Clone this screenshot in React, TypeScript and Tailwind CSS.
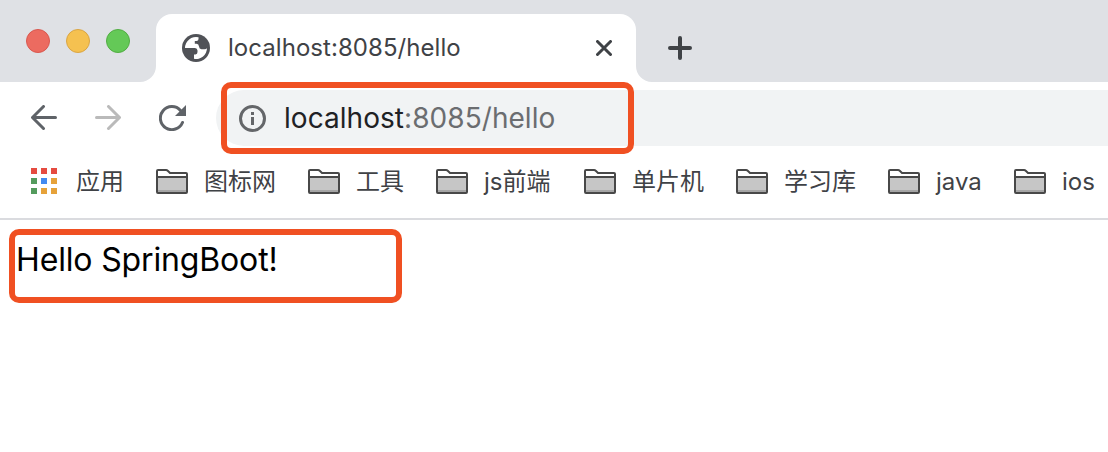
import React from "react";

const font = "font-['Inter','Noto_Sans_CJK_SC',sans-serif]";

function Globe() {
  return (
    <svg className="block size-7 shrink-0" viewBox="0 0 28 28">
      <circle cx="14" cy="14" r="14" fill="#505257" />
      <path fill="#fff" d="M3 14A11 11 0 0 1 16.500 3.300V5Q16.500 7 14.500 7H12.800V9.800H14.500Q16.800 10 17 12.500Q17.200 15 19.500 15.300H22.500Q24.500 15.300 25 14A11 11 0 0 1 12 24.800V20.500H13.500Q15.500 20.300 15.500 18V16.500Q15.300 14 13 14Z" />
    </svg>
  );
}

function Folder() {
  return (
    <svg className="block h-[25px] w-8 shrink-0" viewBox="0 0 32 25">
      <path d="M1 23V2Q1 1 2 1H10Q11 1 12 2L14 4H30Q31 4 31 5V23Q31 24 30 24H2Q1 24 1 23Z" fill="#fff" stroke="#484848" strokeWidth="2" />
      <path d="M2 8H30V23H2Z" fill="#c6c6c6" />
      <path d="M2 21H30V23H2Z" fill="#a5a5a5" />
      <path d="M1 8H31" stroke="#484848" strokeWidth="2" />
    </svg>
  );
}

const apps = ["bg-[#e54b40]", "bg-[#e54b40]", "bg-[#e54b40]", "bg-[#549b5d]", "bg-[#438af0]", "bg-[#e6a23a]", "bg-[#549b5d]", "bg-[#e6a23a]", "bg-[#e6a23a]"];

const bookmarks = [
  { label: "图标网", width: "w-[152px]" },
  { label: "工具", width: "w-[128px]" },
  { label: "js前端", width: "w-[148px]" },
  { label: "单片机", width: "w-[152px]" },
  { label: "学习库", width: "w-[152px]" },
  { label: "java", width: "w-[126px]" },
  { label: "ios", width: "w-[100px]" },
];

export default function App() {
  return (
    <div className={`relative h-[452px] w-[1108px] overflow-hidden bg-white ${font}`}>
      <header className="flex h-[82px] bg-[#dfe1e5]">
        <div className="flex w-[156px] gap-4 pl-[26px] pt-[29px]">
          <span className="size-6 rounded-full border border-[#d9584f] bg-[#ec6b60]" />
          <span className="size-6 rounded-full border border-[#daa544] bg-[#f5c150]" />
          <span className="size-6 rounded-full border border-[#52ad43] bg-[#64c957]" />
        </div>
        <div className="relative mt-[14px] flex h-[68px] w-[480px] items-center rounded-t-2xl bg-white pl-[26px]">
          <svg className="absolute -left-4 bottom-0 size-4" viewBox="0 0 16 16"><path d="M16 0V16H0A16 16 0 0 0 16 0Z" fill="#fff" /></svg>
          <svg className="absolute -right-4 bottom-0 size-4" viewBox="0 0 16 16"><path d="M0 0V16H16A16 16 0 0 1 0 0Z" fill="#fff" /></svg>
          <Globe />
          <span className="ml-[18px] w-[368px] whitespace-nowrap text-[24px] leading-8 tracking-[0.05px] text-[#3f4246]">localhost:8085/hello</span>
          <svg className="block size-4" viewBox="0 0 16 16"><path d="M1.500 1.500L14.500 14.500M14.500 1.500L1.500 14.500" stroke="#3f4246" strokeWidth="3" strokeLinecap="round" /></svg>
        </div>
        <svg className="ml-8 mt-9 block size-6" viewBox="0 0 24 24"><path d="M12 2V22M2 12H22" stroke="#3f4246" strokeWidth="4" strokeLinecap="round" /></svg>
      </header>

      <div className="flex h-[72px] items-center">
        <svg className="ml-[31px] block h-[26px] w-[26px]" viewBox="0 0 26 26" fill="none" stroke="#5f6368" strokeWidth="3" strokeLinecap="round" strokeLinejoin="round"><path d="M12.500 1.500L1.500 12.500L12.500 23.500M2 12.500H24.500" /></svg>
        <svg className="ml-[38px] block h-[26px] w-[26px]" viewBox="0 0 26 26" fill="none" stroke="#bababa" strokeWidth="3" strokeLinecap="round" strokeLinejoin="round"><path d="M13.500 1.500L24.500 12.500L13.500 23.500M24 12.500H1.500" /></svg>
        <svg className="ml-[38px] block h-[26px] w-[27px]" viewBox="0 0 27 26"><path d="M23.500 17.500A11.500 11.500 0 1 1 21.500 5.500" fill="none" stroke="#5f6368" strokeWidth="3" strokeLinecap="round" /><path d="M27 0V11H16Z" fill="#5f6368" /></svg>
        <div className="ml-[30px] flex h-14 flex-1 items-center rounded-l-full bg-[#f1f3f4] pl-[23px]">
          <svg className="block size-[27px]" viewBox="0 0 27 27"><circle cx="13.500" cy="13.500" r="12" fill="none" stroke="#646669" strokeWidth="3" /><path d="M12 7H15V10H12ZM12 12H15V20H12Z" fill="#646669" /></svg>
          <span className="ml-[18px] whitespace-nowrap text-[28px] leading-9 tracking-[0.05px] text-[#6b6d70]"><span className="text-[#202124]">localhost</span>:8085/hello</span>
        </div>
      </div>

      <nav className="flex h-[66px] items-start border-b-2 border-[#dadbdf] pl-[31px] pt-[14px] text-[24px] text-[#3f4246]">
        <div className="grid grid-cols-[6px_6px_6px] gap-1">
          {apps.map((color, i) => <span key={i} className={`size-1.5 ${color}`} />)}
        </div>
        <span className="ml-[19px] w-20 shrink-0 whitespace-nowrap leading-7">应用</span>
        {bookmarks.map(({ label, width }) => (
          <div key={label} className={`flex shrink-0 pt-[1px] ${width}`}>
            <Folder />
            <span className="-mt-[1px] ml-4 whitespace-nowrap leading-7">{label}</span>
          </div>
        ))}
      </nav>

      <main className="pl-4 pt-5">
        <p className="whitespace-nowrap text-[32px] leading-10 tracking-[-0.15px] text-black">Hello SpringBoot!</p>
      </main>

      <div className="absolute left-[221px] top-[82px] h-[72px] w-[413px] rounded-[10px] border-[6px] border-[#f05022]" />
      <div className="absolute left-[9px] top-[229px] h-[74px] w-[393px] rounded-[10px] border-[6px] border-[#f05022]" />
    </div>
  );
}
